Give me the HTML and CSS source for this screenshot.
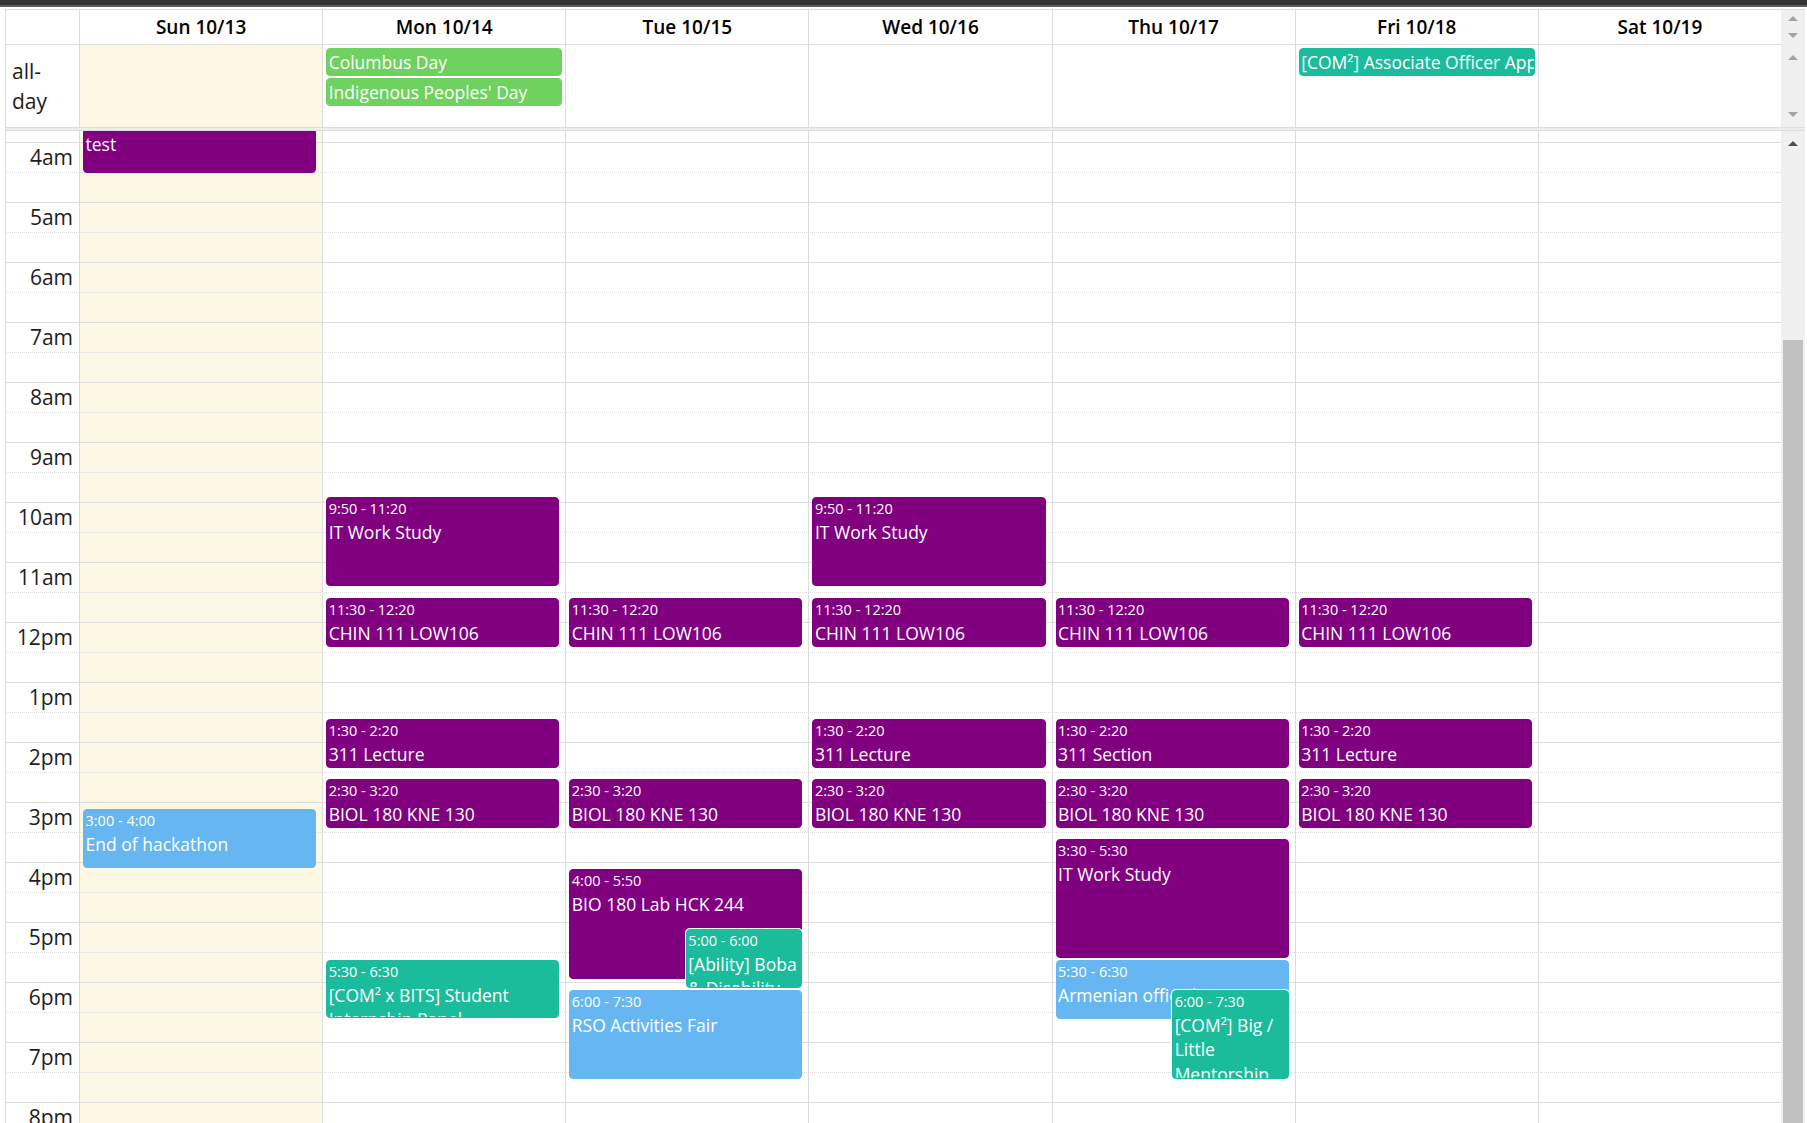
FILE: index.html
```html
<!DOCTYPE html>
<html lang="en">
<head>
    <meta charset="UTF-8">
    <meta name="viewport" content="width=device-width, initial-scale=1.0">
    <title>Week Calendar</title>
    <link rel="stylesheet" href="styles.css">
</head>
<body>
    <div class="top-bar"></div>

    <div class="calendar">
        <!-- Day headers -->
        <div class="cal-head">
            <div class="head-axis"></div>
            <div class="head-cell">Sun 10/13</div>
            <div class="head-cell">Mon 10/14</div>
            <div class="head-cell">Tue 10/15</div>
            <div class="head-cell">Wed 10/16</div>
            <div class="head-cell">Thu 10/17</div>
            <div class="head-cell">Fri 10/18</div>
            <div class="head-cell">Sat 10/19</div>
            <div class="fake-scroll head-scroll">
                <span class="arrow-btn small up off"></span>
                <span class="arrow-btn small down off"></span>
            </div>
        </div>

        <!-- All-day row -->
        <div class="cal-allday">
            <div class="allday-label">all-<br>day</div>
            <div class="allday-cell today"></div>
            <div class="allday-cell">
                <div class="allday-event green">Columbus Day</div>
                <div class="allday-event green">Indigenous Peoples' Day</div>
            </div>
            <div class="allday-cell"></div>
            <div class="allday-cell"></div>
            <div class="allday-cell"></div>
            <div class="allday-cell">
                <div class="allday-event teal">[COM²] Associate Officer Applications Due</div>
            </div>
            <div class="allday-cell"></div>
            <div class="fake-scroll allday-scroll">
                <span class="arrow-btn up off"></span>
                <span class="arrow-btn down off"></span>
            </div>
        </div>

        <div class="divider"></div>

        <!-- Time grid -->
        <div class="cal-body">
            <div class="day-cols">
                <!-- Sun -->
                <div class="day-col today">
                    <div class="events">
                        <div class="event purple cont-top" style="top:0px;height:42px">
                            <div class="ev-title">test</div>
                        </div>
                        <div class="event blue" style="top:678px;height:58.7px">
                            <div class="ev-time">3:00 - 4:00</div>
                            <div class="ev-title">End of hackathon</div>
                        </div>
                    </div>
                </div>
                <!-- Mon -->
                <div class="day-col">
                    <div class="events">
                        <div class="event purple" style="top:366px;height:88.5px">
                            <div class="ev-time">9:50 - 11:20</div>
                            <div class="ev-title">IT Work Study</div>
                        </div>
                        <div class="event purple" style="top:467px;height:48.7px">
                            <div class="ev-time">11:30 - 12:20</div>
                            <div class="ev-title">CHIN 111 LOW106</div>
                        </div>
                        <div class="event purple" style="top:588px;height:48.7px">
                            <div class="ev-time">1:30 - 2:20</div>
                            <div class="ev-title">311 Lecture</div>
                        </div>
                        <div class="event purple" style="top:648px;height:48.5px">
                            <div class="ev-time">2:30 - 3:20</div>
                            <div class="ev-title">BIOL 180 KNE 130</div>
                        </div>
                        <div class="event teal" style="top:829px;height:58px">
                            <div class="ev-time">5:30 - 6:30</div>
                            <div class="ev-title">[COM² x BITS] Student Internship Panel</div>
                        </div>
                    </div>
                </div>
                <!-- Tue -->
                <div class="day-col">
                    <div class="events">
                        <div class="event purple" style="top:467px;height:48.7px">
                            <div class="ev-time">11:30 - 12:20</div>
                            <div class="ev-title">CHIN 111 LOW106</div>
                        </div>
                        <div class="event purple" style="top:648px;height:48.5px">
                            <div class="ev-time">2:30 - 3:20</div>
                            <div class="ev-title">BIOL 180 KNE 130</div>
                        </div>
                        <div class="event purple" style="top:738px;height:109.5px">
                            <div class="ev-time">4:00 - 5:50</div>
                            <div class="ev-title">BIO 180 Lab HCK 244</div>
                        </div>
                        <div class="event teal inset" style="top:798px;height:59px">
                            <div class="ev-time">5:00 - 6:00</div>
                            <div class="ev-title">[Ability] Boba &amp; Disability Social</div>
                        </div>
                        <div class="event blue" style="top:859px;height:89px">
                            <div class="ev-time">6:00 - 7:30</div>
                            <div class="ev-title">RSO Activities Fair</div>
                        </div>
                    </div>
                </div>
                <!-- Wed -->
                <div class="day-col">
                    <div class="events">
                        <div class="event purple" style="top:366px;height:88.5px">
                            <div class="ev-time">9:50 - 11:20</div>
                            <div class="ev-title">IT Work Study</div>
                        </div>
                        <div class="event purple" style="top:467px;height:48.7px">
                            <div class="ev-time">11:30 - 12:20</div>
                            <div class="ev-title">CHIN 111 LOW106</div>
                        </div>
                        <div class="event purple" style="top:588px;height:48.7px">
                            <div class="ev-time">1:30 - 2:20</div>
                            <div class="ev-title">311 Lecture</div>
                        </div>
                        <div class="event purple" style="top:648px;height:48.5px">
                            <div class="ev-time">2:30 - 3:20</div>
                            <div class="ev-title">BIOL 180 KNE 130</div>
                        </div>
                    </div>
                </div>
                <!-- Thu -->
                <div class="day-col">
                    <div class="events">
                        <div class="event purple" style="top:467px;height:48.7px">
                            <div class="ev-time">11:30 - 12:20</div>
                            <div class="ev-title">CHIN 111 LOW106</div>
                        </div>
                        <div class="event purple" style="top:588px;height:48.7px">
                            <div class="ev-time">1:30 - 2:20</div>
                            <div class="ev-title">311 Section</div>
                        </div>
                        <div class="event purple" style="top:648px;height:48.5px">
                            <div class="ev-time">2:30 - 3:20</div>
                            <div class="ev-title">BIOL 180 KNE 130</div>
                        </div>
                        <div class="event purple" style="top:708px;height:119px">
                            <div class="ev-time">3:30 - 5:30</div>
                            <div class="ev-title">IT Work Study</div>
                        </div>
                        <div class="event blue" style="top:829px;height:58.7px">
                            <div class="ev-time">5:30 - 6:30</div>
                            <div class="ev-title">Armenian office hours</div>
                        </div>
                        <div class="event teal inset" style="top:859px;height:89px">
                            <div class="ev-time">6:00 - 7:30</div>
                            <div class="ev-title">[COM²] Big / Little Mentorship Mixer</div>
                        </div>
                    </div>
                </div>
                <!-- Fri -->
                <div class="day-col">
                    <div class="events">
                        <div class="event purple" style="top:467px;height:48.7px">
                            <div class="ev-time">11:30 - 12:20</div>
                            <div class="ev-title">CHIN 111 LOW106</div>
                        </div>
                        <div class="event purple" style="top:588px;height:48.7px">
                            <div class="ev-time">1:30 - 2:20</div>
                            <div class="ev-title">311 Lecture</div>
                        </div>
                        <div class="event purple" style="top:648px;height:48.5px">
                            <div class="ev-time">2:30 - 3:20</div>
                            <div class="ev-title">BIOL 180 KNE 130</div>
                        </div>
                    </div>
                </div>
                <!-- Sat -->
                <div class="day-col">
                    <div class="events"></div>
                </div>
            </div>

            <!-- Half-hour slots, drawn over the column backgrounds -->
            <div class="slats">
                <div class="slot-gap"></div>
                <div class="slot"><span class="time-label">4am</span></div>
                <div class="slot half"></div>
                <div class="slot"><span class="time-label">5am</span></div>
                <div class="slot half"></div>
                <div class="slot"><span class="time-label">6am</span></div>
                <div class="slot half"></div>
                <div class="slot"><span class="time-label">7am</span></div>
                <div class="slot half"></div>
                <div class="slot"><span class="time-label">8am</span></div>
                <div class="slot half"></div>
                <div class="slot"><span class="time-label">9am</span></div>
                <div class="slot half"></div>
                <div class="slot"><span class="time-label">10am</span></div>
                <div class="slot half"></div>
                <div class="slot"><span class="time-label">11am</span></div>
                <div class="slot half"></div>
                <div class="slot"><span class="time-label">12pm</span></div>
                <div class="slot half"></div>
                <div class="slot"><span class="time-label">1pm</span></div>
                <div class="slot half"></div>
                <div class="slot"><span class="time-label">2pm</span></div>
                <div class="slot half"></div>
                <div class="slot"><span class="time-label">3pm</span></div>
                <div class="slot half"></div>
                <div class="slot"><span class="time-label">4pm</span></div>
                <div class="slot half"></div>
                <div class="slot"><span class="time-label">5pm</span></div>
                <div class="slot half"></div>
                <div class="slot"><span class="time-label">6pm</span></div>
                <div class="slot half"></div>
                <div class="slot"><span class="time-label">7pm</span></div>
                <div class="slot half"></div>
                <div class="slot"><span class="time-label">8pm</span></div>
                <div class="slot half"></div>
            </div>

            <div class="fake-scroll body-scroll">
                <span class="arrow-btn up"></span>
                <div class="track-gap"></div>
                <div class="thumb"></div>
            </div>
        </div>
    </div>
</body>
</html>
```

FILE: styles.css
```css
*, *::before, *::after {
    box-sizing: border-box;
}

html, body {
    margin: 0;
    padding: 0;
    overflow: hidden;
}

body {
    background-color: #fff;
    color: #1d1d1d;
    font-family: "Open Sans", "Liberation Sans", sans-serif;
}

.top-bar {
    height: 7px;
    background-color: #333;
    border-bottom: 2px solid #5c5c5c;
}

.calendar {
    width: 1800px;
    margin: 2px 0 0 5px;
    border-top: 1px solid #ddd;
    border-left: 1px solid #ddd;
}

.cal-head, .cal-allday, .cal-body {
    display: grid;
    grid-template-columns: 73px repeat(7, 1fr) 24px;
}

/* header row */
.cal-head {
    height: 35px;
}

.head-axis {
    border-bottom: 1px solid #ddd;
}

.head-cell {
    border-left: 1px solid #ddd;
    border-bottom: 1px solid #ddd;
    color: #000;
    font-size: 19px;
    font-weight: 600;
    line-height: 34px;
    text-align: center;
}

/* all-day row */
.cal-allday {
    height: 82px;
}

.allday-label {
    display: flex;
    align-items: center;
    padding: 0 6px;
    font-size: 21px;
    line-height: 30px;
}

.allday-cell {
    min-width: 0;
    padding-top: 1.5px;
    border-left: 1px solid #ddd;
    overflow: hidden;
}

.allday-cell.today {
    background-color: #fcf8e3;
}

.allday-event {
    height: 28.4px;
    margin: 1.5px 3px 0;
    padding: 0 1.5px;
    border: 1px solid;
    border-radius: 4px;
    color: #fff;
    font-size: 17.5px;
    line-height: 26.4px;
    white-space: nowrap;
    overflow: hidden;
}

.divider {
    height: 4px;
    background-color: #eee;
    border-top: 1px solid #ddd;
    border-bottom: 1px solid #ddd;
}

/* time grid */
.day-cols {
    grid-column: 2 / 9;
    grid-row: 1;
    display: grid;
    grid-template-columns: repeat(7, 1fr);
}

.day-col {
    min-width: 0;
    border-left: 1px solid #ddd;
}

.day-col.today {
    background-color: #fcf8e3;
}

.events {
    position: relative;
    height: 100%;
}

.slats {
    grid-column: 1 / 9;
    grid-row: 1;
}

.slot-gap {
    height: 11px;
}

.slot {
    height: 30px;
    border-top: 1px solid #ddd;
}

.slot.half {
    border-top-style: dotted;
}

.time-label {
    display: block;
    width: 73px;
    padding-right: 6px;
    font-size: 21px;
    line-height: 29px;
    text-align: right;
}

.event {
    position: absolute;
    left: 3px;
    right: 6px;
    z-index: 1;
    padding: 0 1.5px;
    border: 1px solid;
    border-radius: 4px;
    color: #fff;
    overflow: hidden;
}

.event.inset {
    left: calc(3px + (100% - 9px) / 2);
    z-index: 2;
    box-shadow: 0 0 0 1px #fff;
}

.event.cont-top {
    border-top-left-radius: 0;
    border-top-right-radius: 0;
}

.ev-time {
    font-size: 14.5px;
    line-height: 22px;
    white-space: nowrap;
}

.ev-title {
    font-size: 17.5px;
    line-height: 24.3px;
}

/* event colours */
.purple {
    background-color: #800080;
    border-color: #800080;
}

.teal {
    background-color: #1abc9c;
    border-color: #1abc9c;
}

.blue {
    background-color: #66b6f2;
    border-color: #66b6f2;
}

.green {
    background-color: #6fd160;
    border-color: #6fd160;
}

/* drawn scrollbars */
.fake-scroll {
    display: flex;
    flex-direction: column;
    background-color: #f0f0f0;
}

.allday-scroll {
    justify-content: space-between;
}

.arrow-btn {
    display: flex;
    align-items: center;
    justify-content: center;
    height: 25px;
}

.arrow-btn.small {
    height: 17px;
}

.arrow-btn::before {
    content: "";
    border-left: 5.5px solid transparent;
    border-right: 5.5px solid transparent;
}

.arrow-btn.up::before {
    border-bottom: 5px solid #505050;
}

.arrow-btn.down::before {
    border-top: 5px solid #505050;
}

.arrow-btn.off.up::before {
    border-bottom-color: #a3a3a3;
}

.arrow-btn.off.down::before {
    border-top-color: #a3a3a3;
}

.track-gap {
    height: 184px;
}

.thumb {
    flex: 1;
    margin: 0 2px;
    background-color: #c1c1c1;
}
```
